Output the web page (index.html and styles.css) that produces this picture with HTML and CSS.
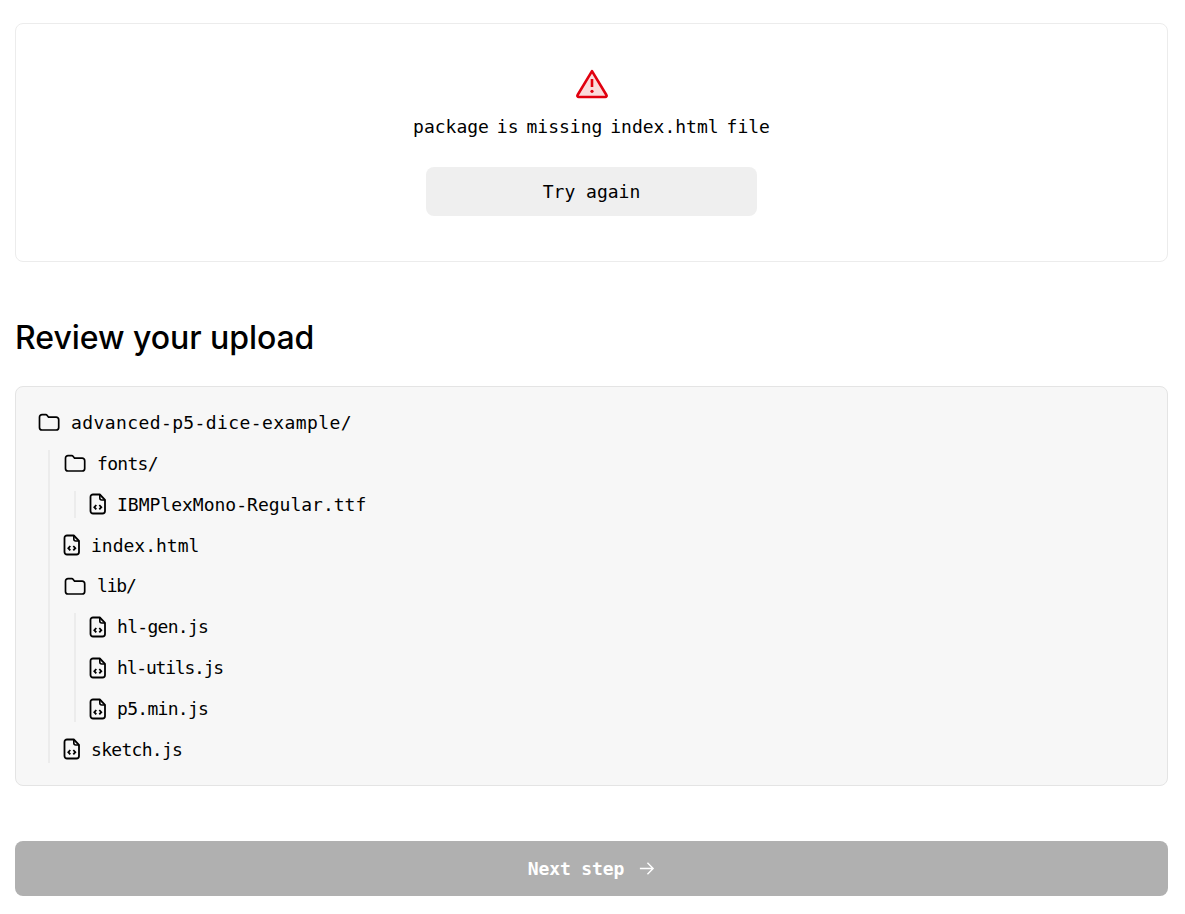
FILE: index.html
```html
<html>
    <head>
        <title>Review your upload</title>
        <link rel="stylesheet" href="styles.css">
    </head>
    <body>
        <svg class="defs" width="0" height="0">
            <symbol id="folder" viewBox="0 0 24 24">
                <path d="M2.5 7.2V17.5a2.5 2.5 0 0 0 2.5 2.5h14.2a2.5 2.5 0 0 0 2.5-2.5V9.7a2.5 2.5 0 0 0-2.5-2.5h-7.6L10 5.2a1.5 1.5 0 0 0-1.1-.5H5a2.5 2.5 0 0 0-2.5 2.5z" fill="none" stroke="#000" stroke-width="1.7" stroke-linejoin="round"/>
            </symbol>
            <symbol id="file" viewBox="0 0 18 22">
                <path d="M4 1.5h6.8L16 6.8V18a2.5 2.5 0 0 1-2.5 2.5H4A2.5 2.5 0 0 1 1.5 18V4A2.5 2.5 0 0 1 4 1.5z" fill="none" stroke="#000" stroke-width="1.8" stroke-linejoin="round"/>
                <path d="M10.8 1.5V5a2 2 0 0 0 2 2H16" fill="none" stroke="#000" stroke-width="1.6"/>
                <path d="M7.3 12 5.3 14.2l2 2.2M10.3 12l2 2.2-2 2.2" fill="none" stroke="#000" stroke-width="1.8"/>
            </symbol>
        </svg>

        <div class="error-card">
            <svg class="warning" viewBox="0 0 32 30" width="32" height="30">
                <path d="M16 2.2 30.4 26a1.3 1.3 0 0 1-1.1 2H2.7a1.3 1.3 0 0 1-1.1-2z" fill="#fbdcdc" stroke="#e1000f" stroke-width="2.6" stroke-linejoin="round"/>
                <path d="M16 10v8" stroke="#e1000f" stroke-width="2.6"/>
                <circle cx="16" cy="22.3" r="1.6" fill="#e1000f"/>
            </svg>
            <p class="message">package is missing index.html file</p>
            <button class="retry">Try again</button>
        </div>

        <h2 class="title">Review your upload</h2>

        <div class="tree">
            <div class="row wide">
                <svg class="icon-folder"><use href="#folder"/></svg>
                <span>advanced-p5-dice-example/</span>
            </div>
            <div class="children">
                <div class="row tight">
                    <svg class="icon-folder"><use href="#folder"/></svg>
                    <span>fonts/</span>
                </div>
                <div class="children">
                    <div class="row">
                        <svg class="icon-file"><use href="#file"/></svg>
                        <span>IBMPlexMono-Regular.ttf</span>
                    </div>
                </div>
                <div class="row">
                    <svg class="icon-file"><use href="#file"/></svg>
                    <span>index.html</span>
                </div>
                <div class="row tighter">
                    <svg class="icon-folder"><use href="#folder"/></svg>
                    <span>lib/</span>
                </div>
                <div class="children">
                    <div class="row tight">
                        <svg class="icon-file"><use href="#file"/></svg>
                        <span>hl-gen.js</span>
                    </div>
                    <div class="row tighter">
                        <svg class="icon-file"><use href="#file"/></svg>
                        <span>hl-utils.js</span>
                    </div>
                    <div class="row tight">
                        <svg class="icon-file"><use href="#file"/></svg>
                        <span>p5.min.js</span>
                    </div>
                </div>
                <div class="row tight">
                    <svg class="icon-file"><use href="#file"/></svg>
                    <span>sketch.js</span>
                </div>
            </div>
        </div>

        <button class="next" disabled>
            <span>Next step</span>
            <svg width="17" height="17" viewBox="0 0 18 18">
                <path d="M2 9h14M10 3l6 6-6 6" fill="none" stroke="#fff" stroke-width="1.5"/>
            </svg>
        </button>
    </body>
</html>
```

FILE: styles.css
```css
* {
    box-sizing: border-box;
}
body {
    margin: 0;
    padding: 23px 17px 18px 15px;
    background-color: #FFF;
    color: #000;
    font-family: "DejaVu Sans Mono", "Liberation Mono", monospace;
    font-size: 18px;
}
.defs {
    position: absolute;
}
.error-card {
    height: 239px;
    padding-top: 45px;
    border: 1px solid #ececec;
    border-radius: 8px;
    display: flex;
    flex-direction: column;
    align-items: center;
}
.warning {
    display: block;
}
.message {
    margin: 14px 0 27px;
    height: 27px;
    line-height: 27px;
    word-spacing: -2.9px;
}
.retry {
    width: 331px;
    height: 49px;
    border: none;
    border-radius: 8px;
    background-color: #efefef;
    color: #000;
    font-family: inherit;
    font-size: 18px;
    font-weight: 500;
    cursor: pointer;
}
.title {
    margin: 57px 0 29px;
    height: 38px;
    line-height: 38px;
    font-family: Inter, "Liberation Sans", sans-serif;
    font-size: 32px;
    font-weight: 500;
    letter-spacing: -0.05px;
}
.tree {
    height: 400px;
    padding: 22px 21px 21px;
    background-color: #f7f7f7;
    border: 1px solid #e4e4e4;
    border-radius: 8px;
    display: flex;
    flex-direction: column;
    gap: 14px;
}
.row {
    display: flex;
    align-items: center;
    gap: 10px;
    height: 26.875px;
}
.wide {
    letter-spacing: 0.4px;
}
.tight {
    letter-spacing: -0.7px;
}
.tighter {
    letter-spacing: -1.2px;
}
.icon-folder {
    width: 24px;
    height: 24px;
}
.icon-file {
    width: 18px;
    height: 22px;
}
.children {
    margin-left: 11px;
    padding-left: 13px;
    border-left: 2px solid #ececec;
    display: flex;
    flex-direction: column;
    gap: 14px;
}
.next {
    width: 100%;
    height: 55px;
    margin-top: 55px;
    border: none;
    border-radius: 8px;
    background-color: #b0b0b0;
    color: #FFF;
    font-family: inherit;
    font-size: 18px;
    font-weight: 700;
    letter-spacing: -0.1px;
    display: flex;
    align-items: center;
    justify-content: center;
    gap: 14px;
}
```
